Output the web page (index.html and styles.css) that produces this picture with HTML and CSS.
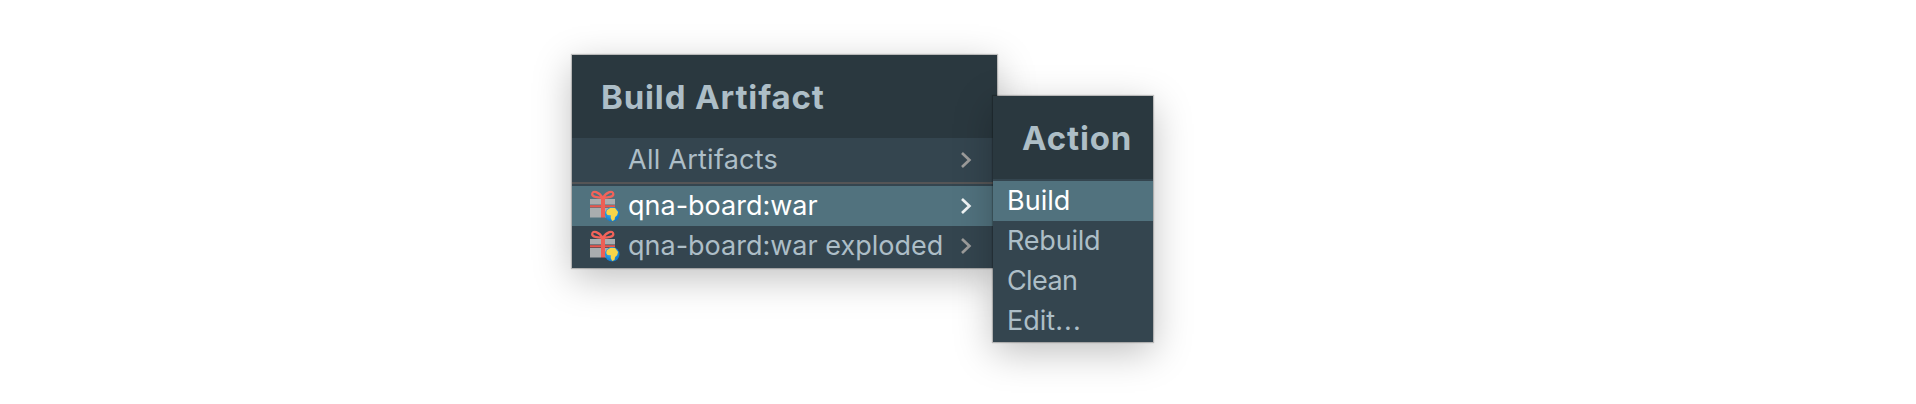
FILE: index.html
```html
<!DOCTYPE html>
<html lang="en">
<head>
<meta charset="utf-8">
<title>Build Artifact</title>
<link rel="stylesheet" href="styles.css">
</head>
<body>
<svg width="0" height="0" class="defs" aria-hidden="true">
  <defs>
    <radialGradient id="sea" cx="0.4" cy="0.35" r="0.65">
      <stop offset="0" stop-color="#45b8f2"/>
      <stop offset="1" stop-color="#0f78cc"/>
    </radialGradient>
    <symbol id="gift" viewBox="0 0 30 32">
      <path d="M0 9h11v5.500H0zM15 9h10v5.500H15zM0 18h11v9.500H0zM15 18h10v9.500H15z" fill="#a9adaf"/>
      <path d="M0 16.300h25" stroke="#e8584f" stroke-width="2.200"/>
      <path d="M13 8v19.500" stroke="#ee5f55" stroke-width="4"/>
      <path d="M12.800 8C9 1.500 2.500 0 2.200 4 2 7.200 8 7.600 12.800 8zM12.800 8C16.500 1.500 23 0 23.300 4 23.500 7.200 17.500 7.600 12.800 8z" fill="none" stroke="#f2635a" stroke-width="2.300"/>
      <circle cx="22.200" cy="24.300" r="7.300" fill="url(#sea)"/>
      <path d="M16.900 20.200l3.300-2.200 4.800.1 3.100 3.900-1 3.300-2 1.800-.6 2.800-2.400 1-1.400-3 .2-2.600-3.400-.3-1.300-2z" fill="#f8d548"/>
    </symbol>
    <symbol id="chevron" viewBox="0 0 12 18">
      <path d="M2 2l7.400 7L2 16" fill="none" stroke="currentColor" stroke-width="2.700"/>
    </symbol>
  </defs>
</svg>
<section class="popup popup-artifacts">
  <h1 class="title">Build Artifact</h1>
  <ul class="list">
    <li class="item item-all"><span class="label label-all">All Artifacts</span><svg class="chevron"><use href="#chevron"/></svg></li>
    <li class="separator"></li>
    <li class="item selected"><svg class="gift"><use href="#gift"/></svg><span class="label">qna-board:war</span><svg class="chevron"><use href="#chevron"/></svg></li>
    <li class="item"><svg class="gift"><use href="#gift"/></svg><span class="label">qna-board:war exploded</span><svg class="chevron"><use href="#chevron"/></svg></li>
  </ul>
</section>
<section class="popup popup-action">
  <h1 class="title">Action</h1>
  <ul class="list actions">
    <li class="item selected"><span class="label">Build</span></li>
    <li class="item"><span class="label label-rebuild">Rebuild</span></li>
    <li class="item"><span class="label label-clean">Clean</span></li>
    <li class="item"><span class="label">Edit<span class="dots">...</span></span></li>
  </ul>
</section>
</body>
</html>
```
FILE: styles.css
```css
* { box-sizing: border-box; }
body {
  margin: 0;
  height: 404px;
  overflow: hidden;
  background: #fff;
  font-family: Inter, "Liberation Sans", sans-serif;
  position: relative;
}
.defs { position: absolute; }
.popup {
  position: absolute;
  background: #34454f;
  color: #adbec7;
  box-shadow: 0 0 1px 1px rgba(0, 0, 0, .22), 0 10px 36px rgba(0, 0, 0, .25);
}
.popup-artifacts { left: 572px; top: 55px; width: 425px; height: 213px; }
.popup-action { left: 993px; top: 96px; width: 160px; height: 246px; }
.title {
  margin: 0;
  height: 83px;
  padding-left: 29px;
  background: #2a383f;
  font-size: 33px;
  font-weight: 700;
  letter-spacing: .85px;
  line-height: 84px;
  white-space: nowrap;
}
.list { list-style: none; margin: 0; padding: 0; }
.actions { padding-top: 2px; }
.item {
  display: flex;
  align-items: center;
  height: 40px;
  padding: 0 25px 0 18px;
  font-size: 27px;
  font-weight: 430;
  line-height: 40px;
  white-space: nowrap;
}
.item-all { height: 44px; padding-left: 56px; }
.label-all { letter-spacing: .25px; }
.label-rebuild { letter-spacing: -.2px; }
.label-clean { letter-spacing: -.6px; }
.dots { letter-spacing: 1.2px; }
.actions .item { padding: 0 0 0 14px; }
.separator { height: 2px; margin-bottom: 2px; background: #555556; }
.selected { background: #51727e; color: #fff; }
.gift { width: 30px; height: 32px; margin-right: 8px; }
.chevron { width: 12px; height: 18px; margin-left: auto; color: #9c9c9b; }
.selected .chevron { color: #f0f4f5; }
```
